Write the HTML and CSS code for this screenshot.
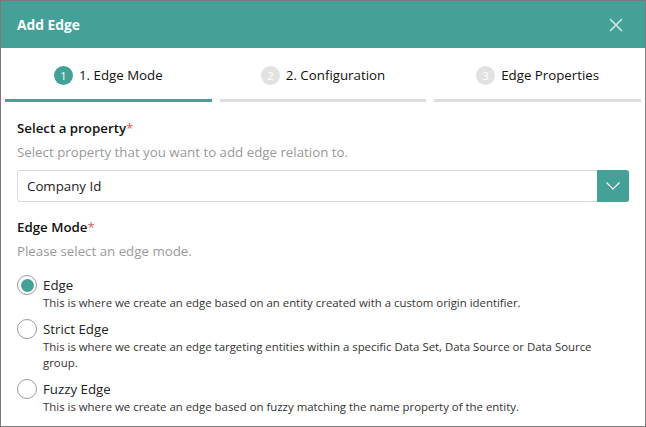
FILE: index.html
```html
<!DOCTYPE html>
<html lang="en">
<head>
<meta charset="utf-8">
<title>Add Edge</title>
<link rel="stylesheet" href="styles.css">
</head>
<body>
<div class="dialog">
  <header class="header">
    <h1 class="title">Add Edge</h1>
    <button class="close" aria-label="Close">
      <svg width="14" height="14" viewBox="0 0 14 14"><path d="M1 1L13 13M13 1L1 13" stroke="currentColor" stroke-width="1.5" fill="none"/></svg>
    </button>
  </header>
  <nav class="steps">
    <div class="step active"><span class="num">1</span><span class="step-label">1. Edge Mode</span></div>
    <div class="step"><span class="num">2</span><span class="step-label">2. Configuration</span></div>
    <div class="step"><span class="num">3</span><span class="step-label">Edge Properties</span></div>
  </nav>
  <main class="content">
    <div class="field">
      <div class="label">Select a property<span class="req">*</span></div>
      <div class="help">Select property that you want to add edge relation to.</div>
      <div class="select">
        <span class="select-value">Company Id</span>
        <span class="select-btn">
          <svg width="14" height="8" viewBox="0 0 14 8"><path d="M0.5 0.5L7 7L13.5 0.5" stroke="#fff" stroke-width="1.1" fill="none"/></svg>
        </span>
      </div>
    </div>
    <div class="field field-mode">
      <div class="label">Edge Mode<span class="req">*</span></div>
      <div class="help">Please select an edge mode.</div>
      <div class="radios">
        <div class="radio checked">
          <span class="circle"></span>
          <span class="radio-label">Edge</span>
          <span class="radio-desc">This is where we create an edge based on an entity created with a custom origin identifier.</span>
        </div>
        <div class="radio">
          <span class="circle"></span>
          <span class="radio-label">Strict Edge</span>
          <span class="radio-desc">This is where we create an edge targeting entities within a specific Data Set, Data Source or Data Source group.</span>
        </div>
        <div class="radio">
          <span class="circle"></span>
          <span class="radio-label">Fuzzy Edge</span>
          <span class="radio-desc">This is where we create an edge based on fuzzy matching the name property of the entity.</span>
        </div>
      </div>
    </div>
  </main>
</div>
</body>
</html>
```

FILE: styles.css
```css
* { box-sizing: border-box; }
html, body { margin: 0; padding: 0; background: #fff; }
body {
  font-family: "Segoe UI", "Open Sans", sans-serif;
  font-size: 13.3px;
  color: #111;
}
.dialog {
  width: 646px;
  height: 427px;
  border: 1px solid #7a7a7a;
  overflow: hidden;
}
.header {
  height: 47px;
  background: #43a197;
  display: flex;
  align-items: center;
  justify-content: space-between;
  padding: 1px 22px 0 16px;
}
.title {
  margin: 0;
  font-size: 13.8px;
  font-weight: 700;
  color: #fff;
  line-height: 20px;
}
.close {
  background: none;
  border: 0;
  padding: 0;
  color: #d5ece8;
  display: flex;
}
.steps {
  display: grid;
  grid-template-columns: 1fr 1fr 1fr;
  column-gap: 8px;
  padding: 0 4px;
}
.step {
  height: 54px;
  padding-top: 3px;
  display: flex;
  align-items: center;
  justify-content: center;
  gap: 6px;
  border-bottom: 3px solid #dedede;
  color: #111;
}
.step.active { border-bottom-color: #43a197; }
.num {
  width: 19px;
  height: 19px;
  border-radius: 50%;
  background: #e2e2e2;
  color: #fff;
  font-size: 11px;
  display: flex;
  align-items: center;
  justify-content: center;
  line-height: 1;
}
.step.active .num { background: #43a197; }
.step-label { font-size: 13.3px; }
.content { padding: 16px 16px 0; }
.label {
  font-weight: 600;
  line-height: 20px;
  color: #111;
}
.req { color: #e0585a; font-weight: 400; }
.help {
  margin-top: 4px;
  line-height: 20px;
  color: #9a9a9a;
}
.select {
  margin-top: 8px;
  width: 612px;
  height: 32px;
  border: 1px solid #dadada;
  border-radius: 3px;
  display: flex;
  align-items: center;
}
.select-value { flex: 1; padding-left: 9px; color: #222; }
.select-btn {
  width: 32px;
  height: 32px;
  margin: -1px -1px -1px 0;
  background: #43a197;
  border-radius: 0 3px 3px 0;
  display: flex;
  align-items: center;
  justify-content: center;
}
.field-mode { margin-top: 15px; }
.radios {
  margin-top: 14px;
  display: flex;
  flex-direction: column;
  gap: 8px;
}
.radio {
  display: grid;
  grid-template-columns: 20px 1fr;
  column-gap: 6px;
}
.circle {
  grid-row: 1;
  grid-column: 1;
  width: 20px;
  height: 20px;
  border: 1px solid #9a9a9a;
  border-radius: 50%;
  display: flex;
  align-items: center;
  justify-content: center;
}
.radio.checked .circle::after {
  content: "";
  width: 13px;
  height: 13px;
  border-radius: 50%;
  background: #43a197;
}
.radio-label {
  grid-row: 1;
  grid-column: 2;
  line-height: 20px;
  color: #222;
}
.radio-desc {
  grid-row: 2;
  grid-column: 2;
  font-size: 11.4px;
  line-height: 16px;
  color: #333;
  padding-right: 20px;
}
```
